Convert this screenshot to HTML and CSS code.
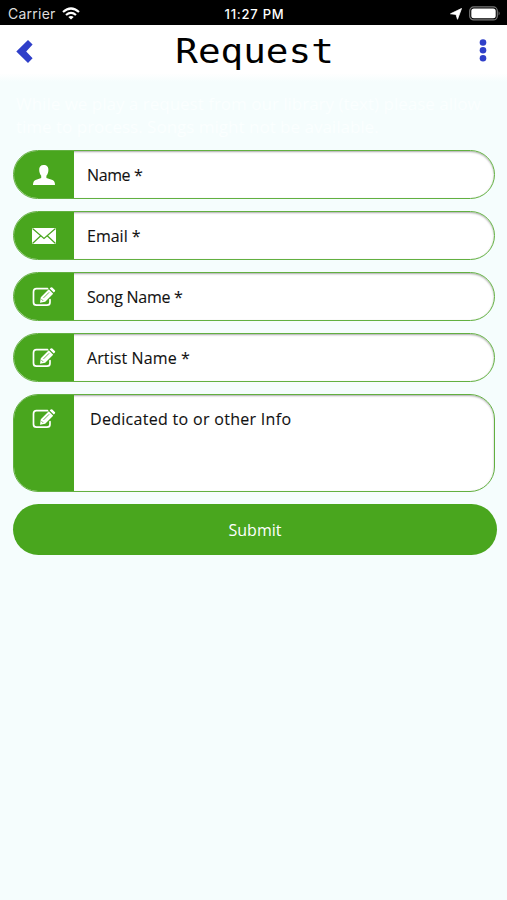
FILE: index.html
```html
<!DOCTYPE html>
<html lang="en">
<head>
<meta charset="utf-8">
<title>Request</title>
<link rel="stylesheet" href="styles.css">
</head>
<body>
<svg class="defs" width="0" height="0" aria-hidden="true">
  <symbol id="edit" viewBox="0 0 24 20">
    <path d="M15.500 1.700H4.500Q1.500 1.700 1.500 4.700v10.500q0 3 3 3h10.500q3 0 3-3v-2.500" fill="none" stroke="#fff" stroke-width="1.700" stroke-linecap="round"/>
    <path d="M8.800 10.300 16.800 2.300l4.400 4.400-8 8-5.200 1zM17.700 1.500l1-1q.8-.7 1.600 0l2.500 2.500q.8.800 0 1.600l-1 1z" fill="#fff"/>
    <path d="M11.500 10.900l5.600-5.600M9.500 12.200l1.700 1.700" stroke="#49a61e" stroke-width=".8" fill="none"/>
  </symbol>
</svg>
<div class="status">
  <div class="carrier"><span>Carrier</span>
    <svg width="18" height="13" viewBox="0 0 18 13"><g fill="none" stroke="#fff" stroke-width="2.200"><path d="M1 5q8-7 16 0"/><path d="M4 8q5-4.300 10 0"/></g><path d="M6.300 10q2.700-2 5.400 0L9 12.600z" fill="#fff"/></svg>
  </div>
  <div class="time">11:27 PM</div>
  <div class="power">
    <svg width="12" height="12" viewBox="0 0 12 12"><path d="M11.500.5 7.500 11.300 6 6.400.5 5.800z" fill="#fff" stroke="#fff" stroke-width=".8"/></svg>
    <svg width="32" height="15" viewBox="0 0 32 15"><rect x=".7" y=".9" width="27.600" height="13" rx="4" fill="none" stroke="#777" stroke-width="1.200"/><rect x="2.300" y="2.500" width="24.400" height="9.800" rx="2.500" fill="#fff"/><path d="M29.600 5.200q2 2.200 0 4.400z" fill="#777"/></svg>
  </div>
</div>
<header class="header">
  <svg width="18" height="25" viewBox="0 0 18 25"><path d="M.3 12.500 12 1l4.600 4.600L10.200 12.500l6.400 6.800-4.600 4.600z" fill="#2f3fc9"/></svg>
  <h1>Request</h1>
  <svg width="8" height="24" viewBox="0 0 8 24" fill="#2f3fc9"><circle cx="4" cy="3.500" r="3.300"/><circle cx="4" cy="11.300" r="3.300"/><circle cx="4" cy="19.200" r="3.300"/></svg>
</header>
<main>
  <p class="intro">While we play a request from our library (text) please allow time to process. Songs might not be available.</p>
  <form class="form">
    <div class="field"><span class="icon"><svg width="24" height="22" viewBox="0 0 24 22"><path d="M11.700 1C8.500 1 7 3 7.200 6c0 2.500 1 4.500 2 5.700v2.300L3.500 16Q1 17 1 21h22q0-4-2.500-5l-6.100-2v-2.300c1.200-1.200 2-3.200 2-5.700C16.600 3 14.900 1 11.700 1z" fill="#fff"/></svg></span><label class="name">Name *</label></div>
    <div class="field"><span class="icon"><svg width="24" height="18" viewBox="0 0 24 18"><path d="M0 1h24v16H0z" fill="#fff"/><path d="M.5 1.500 12 11.500l11.500-10M.5 16.500 8.500 9M23.500 16.500l-8-7.500" fill="none" stroke="#49a61e" stroke-width="1.200"/></svg></span><label>Email *</label></div>
    <div class="field"><span class="icon"><svg width="24" height="20"><use href="#edit"/></svg></span><label class="song">Song Name *</label></div>
    <div class="field"><span class="icon"><svg width="24" height="20"><use href="#edit"/></svg></span><label class="artist">Artist Name *</label></div>
    <div class="field area"><span class="icon"><svg width="24" height="20"><use href="#edit"/></svg></span><label class="info">Dedicated to or other Info</label></div>
    <button type="button" class="submit">Submit</button>
  </form>
</main>
</body>
</html>
```
FILE: styles.css
```css
* { box-sizing: border-box; }
body { margin: 0; height: 900px; overflow: hidden; background: #f5fdfd; color: #111; font-family: "Trebuchet MS", "Open Sans", sans-serif; }
svg { display: block; flex: none; }
.defs { position: absolute; }
.status { height: 25px; padding: 2px 6px 0 8px; background: #000; color: #fff; display: grid; grid-template-columns: 1fr auto 1fr; align-items: center; font: 14px/20px Inter, sans-serif; }
.carrier { display: flex; align-items: center; gap: 6px; color: #ddd; letter-spacing: .25px; }
.time { font-size: 13px; font-weight: 500; letter-spacing: .75px; }
.power { display: flex; justify-content: flex-end; align-items: center; gap: 7px; }
.header { height: 57px; padding: 0 20px 5px 16px; display: flex; align-items: center; justify-content: space-between; background: linear-gradient(#fff 85%, #f5fdfd); }
h1 { margin: 2px 4px 0 0; font: 33px/50px "DejaVu Sans Mono", monospace; color: #000; transform: scaleX(1.14); }
main { padding: 10px 10px 0 13px; }
.intro { margin: 0; height: 58px; padding: 0 3px; color: #fbffff; font-size: 17px; line-height: 23px; }
.form { display: flex; flex-direction: column; gap: 12px; }
.field { width: 482px; height: 49px; display: flex; border: 1px solid #62b040; border-radius: 25px; overflow: hidden; background: #fff; box-shadow: inset 0 1px 2px #aaa; }
.icon { width: 61px; margin: -1px 0 -1px -1px; background: #49a61e; display: flex; justify-content: center; align-items: center; }
.field label { padding-left: 13px; font-size: 16px; line-height: 49px; white-space: nowrap; -webkit-text-stroke: .1px #111; }
.field .name { letter-spacing: -.4px; }
.field .song { letter-spacing: -.3px; }
.field .artist { letter-spacing: .1px; }
.area { height: 98px; }
.area .icon { align-items: flex-start; padding-top: 15px; }
.field .info { padding-left: 16px; letter-spacing: .3px; }
.submit { width: 484px; height: 51px; border: 0; border-radius: 26px; background: #49a61e; color: #fff; font: 16px/50px "Trebuchet MS", "Open Sans", sans-serif; padding: 0; }
```
